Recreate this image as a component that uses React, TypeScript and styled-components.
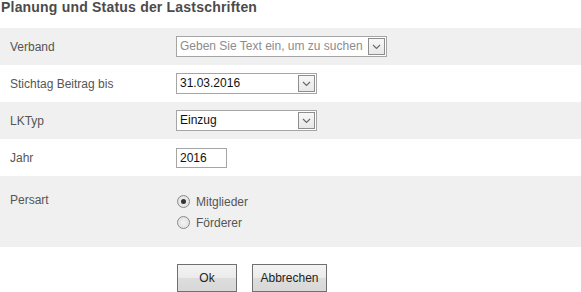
import styled, { createGlobalStyle } from "styled-components";

// Grundstil der Seite
const GlobalStyle = createGlobalStyle`
  body {
    margin: 0;
    background: #ffffff;
    font-family: "Liberation Sans", Arial, sans-serif;
    font-size: 12px;
    color: #555555;
  }
`;

const Page = styled.div`
  width: 581px;
  display: flex;
  flex-direction: column;
`;

const Title = styled.h1`
  margin: 0;
  padding: 0 0 0 1px;
  height: 28px;
  font-size: 14px;
  line-height: 15px;
  letter-spacing: 0.2px;
  font-weight: bold;
  color: #4b4b4b;
`;

// Formularzeile, abwechselnd grau und weiß
const Row = styled.div<{ $shaded?: boolean; $tall?: boolean }>`
  display: grid;
  grid-template-columns: 176px 1fr;
  align-items: ${(p) => (p.$tall ? "start" : "center")};
  height: ${(p) => (p.$tall ? "71px" : "37px")};
  background: ${(p) => (p.$shaded ? "#f0f0f0" : "#ffffff")};
`;

const Label = styled.div<{ $top?: boolean }>`
  padding-left: 10px;
  padding-top: ${(p) => (p.$top ? "17px" : "0")};
  line-height: 14px;
  color: #555555;
`;

const Combo = styled.div<{ $width: number }>`
  box-sizing: border-box;
  width: ${(p) => p.$width}px;
  height: 21px;
  border: 1px solid #a5a5a5;
  background: #ffffff;
  display: flex;
  align-items: center;
  padding: 0 1px 0 3px;
`;

const ComboText = styled.span<{ $placeholder?: boolean }>`
  flex: 1;
  line-height: 17px;
  color: ${(p) => (p.$placeholder ? "#8c8c8c" : "#111111")};
  white-space: nowrap;
  overflow: hidden;
`;

const ArrowButton = styled.span`
  box-sizing: border-box;
  width: 17px;
  height: 17px;
  border: 1px solid #8e8e8e;
  background: linear-gradient(#f7f7f7, #e8e8e8);
  display: flex;
  align-items: center;
  justify-content: center;
`;

const TextInput = styled.input`
  box-sizing: border-box;
  width: 51px;
  height: 20px;
  border: 1px solid #a5a5a5;
  padding: 0 3px;
  font-family: inherit;
  font-size: 12px;
  color: #111111;
  outline: none;
`;

const RadioGroup = styled.div`
  padding-top: 15px;
  display: flex;
  flex-direction: column;
`;

const RadioLine = styled.label`
  display: flex;
  align-items: center;
  gap: 6px;
  height: 21px;
  color: #555555;
`;

const RadioCircle = styled.span<{ $checked?: boolean }>`
  box-sizing: border-box;
  width: 13px;
  height: 13px;
  margin-left: 1px;
  border-radius: 50%;
  border: 1px solid #8a8a8a;
  background: radial-gradient(circle at 50% 50%, #f4f4f4, #dcdcdc);
  display: flex;
  align-items: center;
  justify-content: center;

  &::after {
    content: "";
    display: ${(p) => (p.$checked ? "block" : "none")};
    width: 5px;
    height: 5px;
    border-radius: 50%;
    background: #333333;
  }
`;

const Actions = styled.div`
  display: flex;
  gap: 15px;
  padding: 17px 0 0 177px;
`;

const Button = styled.button<{ $width: number }>`
  box-sizing: border-box;
  width: ${(p) => p.$width}px;
  height: 28px;
  border: 1px solid #707070;
  border-radius: 0;
  background: linear-gradient(#f3f3f3 0%, #ebebeb 50%, #dddddd 51%, #d8d8d8 100%);
  font-family: inherit;
  font-size: 12px;
  color: #222222;
  padding: 0;
`;

function Chevron() {
  return (
    <svg width="9" height="6" viewBox="0 0 9 6">
      <path d="M1 1 L4.5 4.5 L8 1" fill="none" stroke="#6a6a6a" strokeWidth="1.2" />
    </svg>
  );
}

function Lastschriften() {
  return (
    <Page>
      <Title>Planung und Status der Lastschriften</Title>
      <Row $shaded>
        <Label>Verband</Label>
        <Combo $width={211}>
          <ComboText $placeholder>Geben Sie Text ein, um zu suchen</ComboText>
          <ArrowButton>
            <Chevron />
          </ArrowButton>
        </Combo>
      </Row>
      <Row>
        <Label>Stichtag Beitrag bis</Label>
        <Combo $width={141}>
          <ComboText>31.03.2016</ComboText>
          <ArrowButton>
            <Chevron />
          </ArrowButton>
        </Combo>
      </Row>
      <Row $shaded>
        <Label>LKTyp</Label>
        <Combo $width={141}>
          <ComboText>Einzug</ComboText>
          <ArrowButton>
            <Chevron />
          </ArrowButton>
        </Combo>
      </Row>
      <Row>
        <Label>Jahr</Label>
        <TextInput defaultValue="2016" />
      </Row>
      <Row $shaded $tall>
        <Label $top>Persart</Label>
        <RadioGroup>
          <RadioLine>
            <RadioCircle $checked />
            Mitglieder
          </RadioLine>
          <RadioLine>
            <RadioCircle />
            Förderer
          </RadioLine>
        </RadioGroup>
      </Row>
      <Actions>
        <Button $width={60}>Ok</Button>
        <Button $width={75}>Abbrechen</Button>
      </Actions>
    </Page>
  );
}

export default function App() {
  return (
    <>
      <GlobalStyle />
      <Lastschriften />
    </>
  );
}
